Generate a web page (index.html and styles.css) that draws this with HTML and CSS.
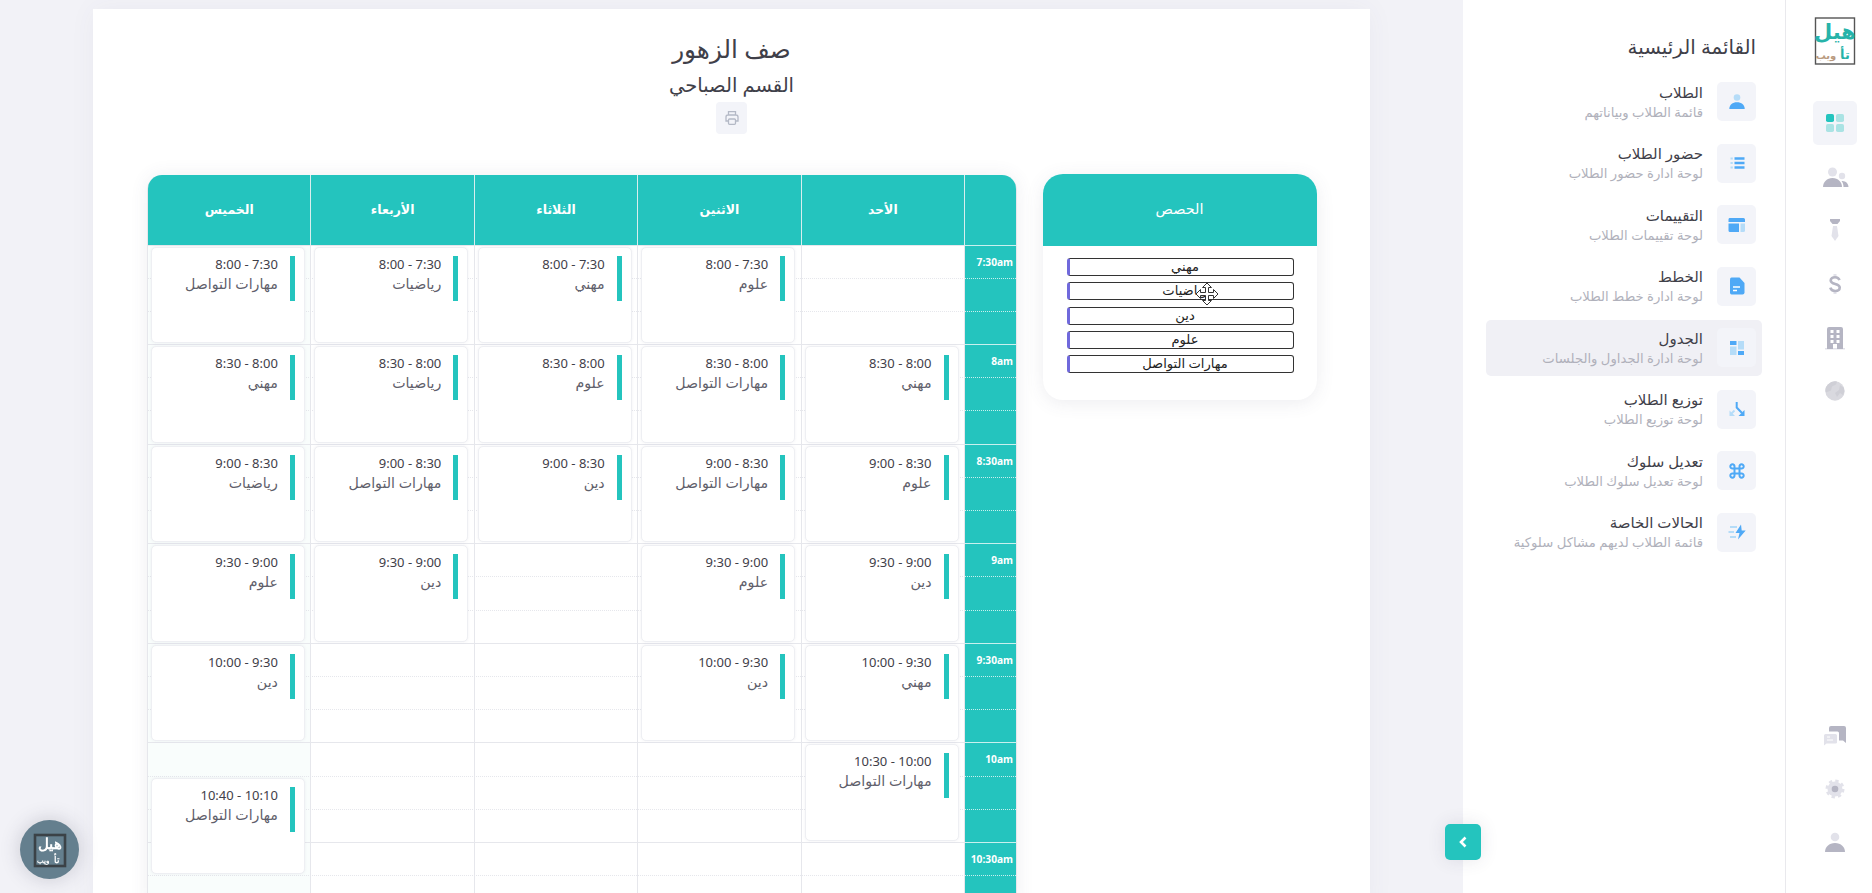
FILE: index.html
```html
<!DOCTYPE html>
<html lang="ar" dir="rtl">
<head>
  <meta charset="UTF-8" />
  <meta name="viewport" content="width=device-width, initial-scale=1.0"/>
  <title>صف الزهور</title>
  <link rel="stylesheet" href="styles.css">
</head>
<body>

  <nav class="rail">
    <svg class="logo" width="46" height="52" viewBox="0 0 46 52">
      <rect x="3.500" y="3" width="39" height="46" fill="none" stroke="#555" stroke-width="1.4"/>
      <text class="logo-main" x="23" y="24">هيل</text>
      <text class="logo-sub" x="33" y="44">تأ</text>
      <text class="logo-web" x="14" y="44">ويب</text>
    </svg>
    <a class="rail-item active">
      <svg width="24" height="24" viewBox="0 0 24 24"><rect x="3" y="3" width="8" height="8" rx="1.8" fill="#24c4be"/><g fill="#24c4be" opacity=".35"><rect x="13" y="3" width="8" height="8" rx="1.8"/><rect x="3" y="13" width="8" height="8" rx="1.8"/><rect x="13" y="13" width="8" height="8" rx="1.8"/></g></svg>
    </a>
    <a class="rail-item">
      <svg width="27" height="24" viewBox="0 0 27 24"><g fill="#e2e2ea"><circle cx="10.500" cy="7" r="4.500"/><circle cx="20" cy="11" r="3.200"/></g><g fill="#b5b5c3"><path d="M1 22c0-5 4-9 9.500-9s9.500 4 9.500 9z"/><path d="M21.500 22c0-2.500-.7-4.500-2-6 4-.5 7 2.500 7 6z"/></g></svg>
    </a>
    <a class="rail-item">
      <svg width="24" height="24" viewBox="0 0 24 24"><path d="M7 1h10v2l-2.500 3h-5L7 3z" fill="#b5b5c3"/><path d="M10 8h4l1.500 10-3.500 5-3.500-5z" fill="#e2e2ea"/></svg>
    </a>
    <a class="rail-item">
      <svg width="24" height="24" viewBox="0 0 24 24"><path d="M12 2v3M12 19v3" stroke="#e2e2ea" stroke-width="3"/><path d="M16.500 8.200C15.800 6 14 5.200 12 5.200c-2.300 0-4.300 1.100-4.300 3.300 0 4.600 9 2.400 9 7 0 2.300-2 3.500-4.500 3.500-2.400 0-4.300-1-4.900-3.300" fill="none" stroke="#b5b5c3" stroke-width="2.600"/></svg>
    </a>
    <a class="rail-item">
      <svg width="24" height="24" viewBox="0 0 24 24"><path d="M2 22h20v1.500H2z" fill="#e2e2ea"/><path fill-rule="evenodd" d="M6 1h12q2 0 2 2v20h-6v-5h-4v5H4V3q0-2 2-2zM7.500 4v3h3V4zM13.500 4v3h3V4zM7.500 9v3h3V9zM13.500 9v3h3V9zM7.500 14v3h3v-3zM13.500 14v3h3v-3z" fill="#b5b5c3"/></svg>
    </a>
    <a class="rail-item">
      <svg width="24" height="24" viewBox="0 0 24 24"><circle cx="12" cy="12" r="9.700" fill="#d9d9df"/><path d="M5 5.500q4-4 9-3l-1 3-4 2-1 4-5 2q-2-4 2-8zM17 6l4 3q1 4-1 7l-3-2-3 4-2-4 4-3z" fill="#cfcfd6"/></svg>
    </a>
    <span class="rail-space"></span>
    <a class="rail-item">
      <svg width="24" height="24" viewBox="0 0 24 24"><path d="M8 2h13q2 0 2 2v15l-3-2.500h-4V9q0-1.500-1.500-1.500H6V4q0-2 2-2z" fill="#b5b5c3"/><path d="M2.500 10h10q1.500 0 1.500 1.500v7q0 1-1.500 1H3.500L1 21.500v-10Q1 10 2.500 10z" fill="#e2e2ea"/><path d="M4 13h3M4 16h6" stroke="#fff" stroke-width="1"/></svg>
    </a>
    <a class="rail-item">
      <svg width="24" height="24" viewBox="0 0 24 24"><circle cx="12" cy="12" r="7.500" fill="#e2e2ea"/><circle cx="12" cy="12" r="7.800" fill="none" stroke="#e2e2ea" stroke-width="3.400" stroke-dasharray="3.200 2.930"/><circle cx="12" cy="12" r="3.300" fill="#b5b5c3"/></svg>
    </a>
    <a class="rail-item">
      <svg width="24" height="24" viewBox="0 0 24 24"><circle cx="12" cy="6" r="4.300" fill="#e2e2ea"/><path d="M2 21c0-5 4-9 10-9s10 4 10 9z" fill="#b5b5c3"/></svg>
    </a>
  </nav>

  <aside class="menu">
    <h2>القائمة الرئيسية</h2>
    <a class="menu-item">
      <span class="menu-icon"><svg width="20" height="20" viewBox="0 0 20 20"><circle cx="10" cy="5.500" r="3.300" fill="#b5dcf8"/><path d="M2.300 17c0-4 3.300-6.700 7.700-6.700s7.700 2.700 7.700 6.700z" fill="#4fa9f6"/></svg></span>
      <span class="menu-text"><b>الطلاب</b><small>قائمة الطلاب وبياناتهم</small></span>
    </a>
    <a class="menu-item">
      <span class="menu-icon"><svg width="20" height="20" viewBox="0 0 20 20"><path d="M7.500 5.500h10M7.500 10h10M7.500 14.500h10" stroke="#4fa9f6" stroke-width="2.700"/><path d="M3.500 5.500h2.300M3.500 10h2.300M3.500 14.500h2.300" stroke="#b5dcf8" stroke-width="2"/></svg></span>
      <span class="menu-text"><b>حضور الطلاب</b><small>لوحة ادارة حضور الطلاب</small></span>
    </a>
    <a class="menu-item">
      <span class="menu-icon"><svg width="20" height="20" viewBox="0 0 20 20"><path d="M2.500 3h14q1.500 0 1.500 1.500V7H1.500V4.500Q1.500 3 2.500 3zM1.500 8.500H12v8.500H3q-1.500 0-1.500-1.500z" fill="#4fa9f6"/><path d="M13.500 8.500H18v7q0 1.500-1.500 1.500h-3z" fill="#b5dcf8"/></svg></span>
      <span class="menu-text"><b>التقييمات</b><small>لوحة تقييمات الطلاب</small></span>
    </a>
    <a class="menu-item">
      <span class="menu-icon"><svg width="20" height="20" viewBox="0 0 20 20"><path d="M4.500 1.500h8L17.500 7v9.500q0 2-2 2h-11q-1.500 0-1.500-2v-13q0-2 1.500-2z" fill="#4fa9f6"/><path d="M6 11h7M6 14.500h4" stroke="#fff" stroke-width="1.500"/></svg></span>
      <span class="menu-text"><b>الخطط</b><small>لوحة ادارة خطط الطلاب</small></span>
    </a>
    <a class="menu-item active">
      <span class="menu-icon"><svg width="20" height="20" viewBox="0 0 20 20"><path d="M3 3h6.500v4H3zM11 13h6v4h-6z" fill="#4fa9f6"/><path d="M3 8.500h6.500V17H3zM11 3h6v8.500h-6z" fill="#b5dcf8"/></svg></span>
      <span class="menu-text"><b>الجدول</b><small>لوحة ادارة الجداول والجلسات</small></span>
    </a>
    <a class="menu-item">
      <span class="menu-icon"><svg width="20" height="20" viewBox="0 0 20 20"><path d="M9.700 3v5.500L15 14" fill="none" stroke="#4fa9f6" stroke-width="2"/><path d="M17.500 11v6h-6z" fill="#4fa9f6"/><path d="M7.500 11.500L4 15" stroke="#b5dcf8" stroke-width="1.800"/><path d="M2.500 11.500V17h5.500z" fill="#b5dcf8"/></svg></span>
      <span class="menu-text"><b>توزيع الطلاب</b><small>لوحة توزيع الطلاب</small></span>
    </a>
    <a class="menu-item">
      <span class="menu-icon"><svg width="20" height="20" viewBox="0 0 20 20"><path d="M7.500 7.500h5v5h-5zM7.500 7.500H5.600a2.100 2.100 0 1 1 1.900-1.900zM12.500 7.500V5.600a2.100 2.100 0 1 1 1.900 1.900zM7.500 12.500v1.900a2.100 2.100 0 1 1-1.900-1.900zM12.500 12.500h1.900a2.100 2.100 0 1 1-1.900 1.900z" fill="none" stroke="#4fa9f6" stroke-width="2"/></svg></span>
      <span class="menu-text"><b>تعديل سلوك</b><small>لوحة تعديل سلوك الطلاب</small></span>
    </a>
    <a class="menu-item">
      <span class="menu-icon"><svg width="20" height="20" viewBox="0 0 20 20"><path d="M14 2.500L8.500 11h4L11 17.500 18.700 8.500h-4z" fill="#4fa9f6"/><path d="M3 5h7M1.500 10h5.500M3 15h6" stroke="#b5dcf8" stroke-width="1.800"/></svg></span>
      <span class="menu-text"><b>الحالات الخاصة</b><small>قائمة الطلاب لديهم مشاكل سلوكية</small></span>
    </a>
    <button class="menu-toggle"><svg width="12" height="14" viewBox="0 0 12 14"><path d="M8.500 2.500L4 7l4.500 4.500" fill="none" stroke="#fff" stroke-width="2.600"/></svg></button>
  </aside>

  <main>
    <section class="card">
      <header class="card-header">
        <h1>صف الزهور</h1>
        <h3>القسم الصباحي</h3>
        <button class="print"><svg width="16" height="16" viewBox="0 0 16 16" fill="none" stroke="#b4b9c6" stroke-width="1.300"><path d="M4.500 5V1.700h7V5M4.500 11H2V7q0-2 2-2h8q2 0 2 2v4h-2.500"/><rect x="4.500" y="9" width="7" height="5.300" rx="1"/></svg></button>
      </header>
      <div class="content">
        <div class="classes">
          <div class="classes-title">الحصص</div>
          <ul class="classes-list">
            <li>مهني</li>
            <li>رياضيات
              <svg class="cursor" width="24" height="24" viewBox="0 0 24 24"><path d="M12 1L7.500 5.500H10.500V10.500H5.500V7.500L1 12l4.500 4.500V13.500H10.500V18.500H7.500L12 23l4.500-4.500H13.500V13.500H18.500V16.500L23 12 18.500 7.500V10.500H13.500V5.500H16.500z" fill="#fff" stroke="#333" stroke-width="1"/></svg>
            </li>
            <li>دين</li>
            <li>علوم</li>
            <li>مهارات التواصل</li>
          </ul>
        </div>
        <div class="calendar">
          <div class="days">
            <span></span>
            <span>الأحد</span>
            <span>الاثنين</span>
            <span>الثلاثاء</span>
            <span>الأربعاء</span>
            <span>الخميس</span>
          </div>
          <div class="grid" id="grid"></div>
        </div>
      </div>
    </section>
  </main>

  <button class="chat">
    <svg width="36" height="36" viewBox="0 0 36 36">
      <rect x="3" y="3" width="30" height="31" fill="none" stroke="#3b4247" stroke-width="2.600"/>
      <text class="logo-main" x="18" y="17">هيل</text>
      <text class="logo-sub" x="25" y="31">تأ</text>
      <text class="logo-web" x="11" y="31">ويب</text>
    </svg>
  </button>

  <script src="script.js"></script>
</body>
</html>
```
FILE: styles.css
```css
* {
  box-sizing: border-box;
}

body {
  margin: 0;
  height: 100vh;
  display: flex;
  overflow: hidden;
  background: #f2f2f7;
  color: #3f4049;
  font-family: "Noto Sans", "DejaVu Sans", sans-serif;
  font-size: 13px;
}

h1, h2, h3, ul {
  margin: 0;
  padding: 0;
  font-weight: 400;
}

button {
  border: none;
  padding: 0;
  display: flex;
  align-items: center;
  justify-content: center;
}

/* icon rail */
.rail {
  width: 87px;
  flex: none;
  background: #fff;
  border-left: 1px solid #e9e9ed;
  padding: 15px 0 28px 12px;
  display: flex;
  flex-direction: column;
  align-items: center;
}

.logo {
  flex: none;
  margin-bottom: 34px;
  overflow: visible;
}

.logo-main,
.logo-sub,
.logo-web {
  text-anchor: middle;
  font-weight: 700;
  fill: #27b3a9;
}

.logo-main {
  font-size: 21px;
}

.logo-sub {
  font-size: 13px;
}

.logo-web {
  font-size: 10px;
  fill: #b99a80;
}

.rail-item {
  width: 44px;
  height: 44px;
  margin-bottom: 9.700px;
  flex: none;
  display: flex;
  align-items: center;
  justify-content: center;
  border-radius: 5px;
}

.rail-item:last-child {
  margin-bottom: 0;
}

.rail-item.active {
  background: #f3f4f9;
}

.rail-space {
  flex: 1;
}

/* side menu */
.menu {
  position: relative;
  width: 322px;
  flex: none;
  background: #fff;
  padding: 30px 23px 0;
}

.menu h2 {
  font-size: 19.800px;
  line-height: 34px;
  padding: 0 6px;
  margin-bottom: 10px;
}

.menu-item {
  display: flex;
  gap: 14px;
  height: 55.500px;
  padding: 0 6px;
  margin-bottom: 6px;
  align-items: center;
  border-radius: 5px;
}

.menu-item.active {
  background: #f0f0f5;
}

.menu-icon {
  width: 39px;
  height: 39px;
  border-radius: 5px;
  background: #f3f4f9;
  display: flex;
  align-items: center;
  justify-content: center;
}

.menu-text b,
.menu-text small {
  display: block;
  font-weight: 400;
  white-space: nowrap;
}

.menu-text b {
  font-size: 15px;
  line-height: 20px;
}

.menu-text small {
  font-size: 13.200px;
  line-height: 20px;
  color: #b0b1bb;
}

.menu-toggle {
  position: absolute;
  left: -18px;
  bottom: 33px;
  width: 36px;
  height: 36px;
  border-radius: 5px;
  background: #24c4be;
  box-shadow: 0 0 18px rgba(60, 60, 90, .12);
}

/* page */
main {
  flex: 1;
  padding: 9px 93px 0;
}

.card {
  height: 900px;
  background: #fff;
  box-shadow: 0 0 25px rgba(80, 80, 110, .05);
}

.card-header {
  height: 166px;
  padding-top: 21px;
  display: flex;
  flex-direction: column;
  align-items: center;
}

.card-header h1 {
  font-size: 24.700px;
  line-height: 38px;
}

.card-header h3 {
  font-size: 19.500px;
  line-height: 33px;
}

.print {
  width: 31px;
  height: 32px;
  margin-top: 1px;
  border-radius: 4px;
  background: #f3f4f9;
}

.content {
  display: flex;
  align-items: flex-start;
  justify-content: space-between;
  padding: 0 53.500px 0 54px;
}

.classes {
  width: 274px;
  height: 226px;
  margin-top: -1px;
  border-radius: 20px;
  box-shadow: 0 3px 18px rgba(80, 80, 110, .1);
}

.classes-title {
  height: 72px;
  border-radius: 20px 20px 0 0;
  background: #24c4be;
  color: #fff;
  font-size: 14.400px;
  line-height: 70px;
  text-align: center;
}

.classes-list {
  list-style: none;
  padding: 12px 23px 0 24px;
  display: grid;
  gap: 6.300px;
}

.classes-list li {
  position: relative;
  height: 18px;
  line-height: 15px;
  padding-left: 8px;
  border: 1px solid #333;
  border-left: 3px solid #7069dc;
  border-radius: 3px;
  text-align: center;
  color: #222;
  font-size: 13.100px;
}

.cursor {
  position: absolute;
  left: 125px;
  top: -1px;
}

/* calendar */
.calendar {
  width: 870px;
  border-radius: 15px 15px 0 0;
  border: 1px solid #e6e7ec;
  border-bottom: none;
  border-top: none;
  box-shadow: 0 0 18px rgba(80, 80, 110, .09);
}

.days,
.grid {
  display: grid;
  grid-template-columns: 51px repeat(5, 1fr);
}

.days {
  height: 69.500px;
  line-height: 69px;
  border-radius: 14px 14px 0 0;
  background: #24c4be;
  color: #fff;
  font-size: 12.500px;
  font-weight: 700;
  text-align: center;
}

.days span + span {
  border-right: 1px solid #d9eeee;
}

.grid {
  grid-template-rows: repeat(20, 33.200px);
}

.column {
  grid-row: 1 / -1;
  border-right: 1px solid #e6e7ec;
}

.column.today {
  background: #f9fdfc;
}

.times {
  grid-column: 1;
  grid-row: 1 / -1;
  background: #24c4be;
}

.slot {
  grid-column: 2 / -1;
  border-top: 1px dotted #e6e7ec;
}

.slot.major {
  border-top: 1px solid #e6e7ec;
}

.time {
  grid-column: 1;
  padding: 0 3px;
  border-top: 1px dotted #c9f0ee;
  color: #fff;
  font-size: 10.200px;
  font-weight: 700;
  line-height: 32px;
  direction: ltr;
  text-align: right;
}

.time.major {
  border-top: 1px solid #c9f0ee;
}

.event {
  margin: 2px 6.500px 1px 3px;
  padding: 8px 9px 0;
  display: flex;
  gap: 12px;
  border: 1px solid #eeeff3;
  border-radius: 5px;
  background: #fff;
  box-shadow: 0 0 3px rgba(80, 80, 110, .08);
  line-height: 20px;
}

.event::before {
  content: "";
  width: 5px;
  height: 45px;
  background: #24c4be;
}

.event-text {
  margin-top: -2px;
}

.subject {
  font-size: 14.200px;
  color: #5f606b;
}

/* chat bubble */
.chat {
  position: fixed;
  left: 20px;
  bottom: 14px;
  width: 59px;
  height: 59px;
  border-radius: 50%;
  background: #647f8e;
  box-shadow: 0 0 20px rgba(60, 60, 80, .22);
}

.chat svg {
  overflow: visible;
}

.chat text {
  fill: #fff;
}

.chat .logo-main {
  font-size: 15px;
}

.chat .logo-sub {
  font-size: 9px;
}

.chat .logo-web {
  font-size: 7px;
}
```
FILE: script.js
```js
const grid = document.getElementById('grid');
const SLOTS = 20;
const START = 7 * 60 + 30;

// [day, start, end, subject]
const events = [
  [1, '8:00', '8:30', 'مهني'],
  [1, '8:30', '9:00', 'علوم'],
  [1, '9:00', '9:30', 'دين'],
  [1, '9:30', '10:00', 'مهني'],
  [1, '10:00', '10:30', 'مهارات التواصل'],
  [2, '7:30', '8:00', 'علوم'],
  [2, '8:00', '8:30', 'مهارات التواصل'],
  [2, '8:30', '9:00', 'مهارات التواصل'],
  [2, '9:00', '9:30', 'علوم'],
  [2, '9:30', '10:00', 'دين'],
  [3, '7:30', '8:00', 'مهني'],
  [3, '8:00', '8:30', 'علوم'],
  [3, '8:30', '9:00', 'دين'],
  [4, '7:30', '8:00', 'رياضيات'],
  [4, '8:00', '8:30', 'رياضيات'],
  [4, '8:30', '9:00', 'مهارات التواصل'],
  [4, '9:00', '9:30', 'دين'],
  [5, '7:30', '8:00', 'مهارات التواصل'],
  [5, '8:00', '8:30', 'مهني'],
  [5, '8:30', '9:00', 'رياضيات'],
  [5, '9:00', '9:30', 'علوم'],
  [5, '9:30', '10:00', 'دين'],
  [5, '10:10', '10:40', 'مهارات التواصل']
];

function add(className, column, row, html) {
  const el = document.createElement('div');
  el.className = className;
  if (column) el.style.gridColumn = column;
  if (row) el.style.gridRow = row;
  el.innerHTML = html || '';
  grid.appendChild(el);
}

function minutes(time) {
  const [h, m] = time.split(':').map(Number);
  return h * 60 + m;
}

// column backgrounds
add('times');
for (let day = 1; day <= 5; day++) {
  add(day === 5 ? 'column today' : 'column', day + 1);
}

// 10 minute slots, label on each half hour
for (let i = 0; i < SLOTS; i++) {
  const major = i % 3 === 0 ? ' major' : '';
  const total = START + i * 10;
  const label = Math.floor(total / 60) + (total % 60 ? ':' + total % 60 : '') + 'am';
  add('slot' + major, '', i + 1);
  add('time' + major, '', i + 1, major ? label : '');
}

events.forEach(([day, start, end, subject]) => {
  const row = (minutes(start) - START) / 10 + 1;
  add('event', day + 1, row + ' / span 3',
    `<div class="event-text"><div>${start} - ${end}</div><div class="subject">${subject}</div></div>`);
});
```
